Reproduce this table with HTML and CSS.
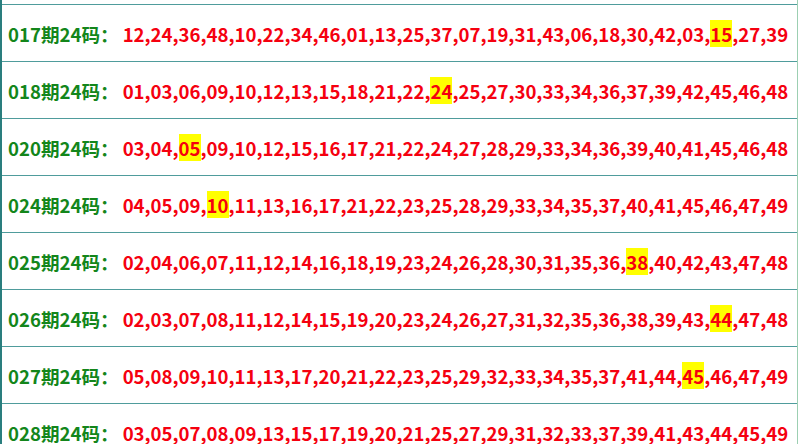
FILE: index.html
```html
<!DOCTYPE html>
<html lang="zh-CN">
<head>
  <meta charset="UTF-8">
  <title>24码</title>
  <link rel="stylesheet" href="styles.css">
</head>
<body>
  <div class="list">
    <div class="row row-cut"></div>
    <div class="row"><span class="label">017期24码：</span><span class="nums">12,24,36,48,10,22,34,46,01,13,25,37,07,19,31,43,06,18,30,42,03,<b class="hit">15</b>,27,39</span></div>
    <div class="row"><span class="label">018期24码：</span><span class="nums">01,03,06,09,10,12,13,15,18,21,22,<b class="hit">24</b>,25,27,30,33,34,36,37,39,42,45,46,48</span></div>
    <div class="row"><span class="label">020期24码：</span><span class="nums">03,04,<b class="hit">05</b>,09,10,12,15,16,17,21,22,24,27,28,29,33,34,36,39,40,41,45,46,48</span></div>
    <div class="row"><span class="label">024期24码：</span><span class="nums">04,05,09,<b class="hit">10</b>,11,13,16,17,21,22,23,25,28,29,33,34,35,37,40,41,45,46,47,49</span></div>
    <div class="row"><span class="label">025期24码：</span><span class="nums">02,04,06,07,11,12,14,16,18,19,23,24,26,28,30,31,35,36,<b class="hit">38</b>,40,42,43,47,48</span></div>
    <div class="row"><span class="label">026期24码：</span><span class="nums">02,03,07,08,11,12,14,15,19,20,23,24,26,27,31,32,35,36,38,39,43,<b class="hit">44</b>,47,48</span></div>
    <div class="row"><span class="label">027期24码：</span><span class="nums">05,08,09,10,11,13,17,20,21,22,23,25,29,32,33,34,35,37,41,44,<b class="hit">45</b>,46,47,49</span></div>
    <div class="row"><span class="label">028期24码：</span><span class="nums">03,05,07,08,09,13,15,17,19,20,21,25,27,29,31,32,33,37,39,41,43,44,45,49</span></div>
  </div>
</body>
</html>
```

FILE: styles.css
```css
* {
  margin: 0;
  padding: 0;
  box-sizing: border-box;
}
body {
  background: #fff;
  font-family: "Noto Sans CJK SC", "Noto Sans", sans-serif;
  font-weight: bold;
  font-size: 18.6px;
  overflow: hidden;
}
/* 列表外框 */
.list {
  width: 798px;
  border-left: 2px solid #2a7e7e;
  border-right: 1px solid #9ccfb2;
}
.row {
  height: 57px;
  display: flex;
  align-items: center;
  padding-left: 6px;
  border-bottom: 1px solid #4f9c9c;
  white-space: nowrap;
}
.row-cut {
  height: 5px;
}
.label {
  color: #13861b;
}
.nums {
  color: #f5000f;
  margin-left: 4px;
}
.hit {
  background: #ffff00;
  font-weight: bold;
}
```
